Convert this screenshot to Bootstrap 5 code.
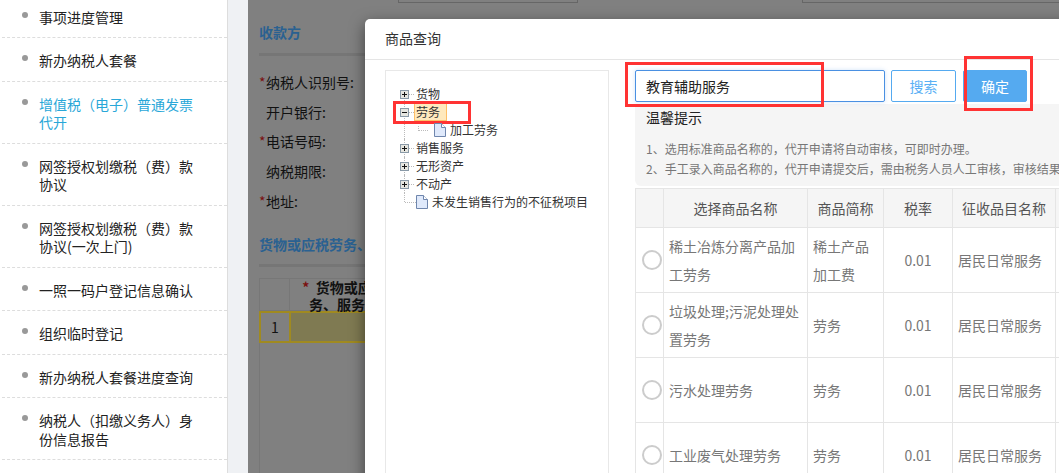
<!DOCTYPE html>
<html lang="zh-CN">
<head>
<meta charset="utf-8">
<title>商品查询</title>
<link href="https://cdn.jsdelivr.net/npm/bootstrap@5.3.0/dist/css/bootstrap.min.css" rel="stylesheet">
<style>
html,body{height:473px;overflow:hidden}
body{font-family:"Noto Sans CJK SC","Liberation Sans",sans-serif;font-size:14px;color:#333;background:#eff1f4;position:relative;line-height:18px}
.side-pane{width:228px;height:473px;background:#fff;border-right:1px solid #ddd;padding:0 0 0 2px;overflow:hidden;flex:none}
.side-list{margin:-5.5px 0 0}
.side-item{position:relative;padding:13px 30px 11px 37px;border-bottom:1px dashed #ddd;color:#222;line-height:18.5px}
.side-item::before{content:"";position:absolute;left:20px;top:17px;width:6px;height:6px;border-radius:50%;background:#999}
.side-item.is-on{color:#29a7d8}
.gutter{width:20px;flex:none}
.back-pane{flex:1;min-width:0;height:473px;background:#808080;padding-left:11px;color:#111;overflow:hidden;position:relative}
.strip{height:3px;padding-left:139px}
.strip-box{height:3px;border:1px solid #666;border-top:0}
.strip-a{width:182px}
.strip-b{width:260px;margin-left:224px;border-right:0}
.sec-title{margin-top:19px;line-height:20px;padding-bottom:11px;border-bottom:3px solid #767676;color:#2a6191;font-weight:700}
.sec-title.second{margin-top:18.5px;white-space:nowrap;padding-bottom:10px}
.form-lines{padding-top:11px}
.form-line{height:29.7px;line-height:30px;padding-left:7px;position:relative}
.req::before{content:"*";position:absolute;left:0;color:#7a1010}
.back-table{margin-top:11px;width:260px;height:200px;border-left:1px solid #777}
.back-head{height:33px;border:1px solid #777;border-left:0;display:flex}
.back-num{width:30px;border-right:1px solid #777;flex:none}
.back-name{width:122px;text-align:center;font-weight:700;line-height:17px}
.back-name i{color:#7a1010;font-style:normal;margin-right:3px}
.back-row{height:32px;display:flex;background:#7f7a52;border:2px solid #a08a20;margin-left:-1px}
.back-row .back-num{width:30px;background:#808080;border-right:2px solid #a08a20;text-align:center;line-height:28px}
.dialog{position:absolute;left:365px;top:19px;width:760px;height:520px;background:#fff;border-radius:5px 0 0 0;box-shadow:0 5px 15px rgba(0,0,0,.5)}
.dialog-head{height:41px;line-height:39px;padding-left:20px;border-bottom:1px solid #e5e5e5;color:#333}
.dialog-body{padding:10px 0 0 20px;gap:26px}
.tree-box{width:224px;height:420px;border:1px solid #e8e8e8;padding-top:14px;padding-left:14px;flex:none;font-size:12px;color:#333;line-height:18px}
.tree-row{height:18px;display:flex;align-items:center;position:relative;white-space:nowrap}
.tree-row::before{content:"";position:absolute;left:4px;top:0;bottom:0;border-left:1px dotted #bbb}
.tree-row.first::before{top:9px}
.tree-row.last::before{bottom:9px}
.tree-row.leaf-child{padding-left:34px}
.tree-row .tick{width:5px;border-top:1px dotted #bbb;flex:none;margin-right:2px}
.tree-row .tick-long{width:11px;margin-left:5px;margin-right:0}
.leaf-child .tick{position:absolute;left:18px;top:5px;width:10px;height:5px;border-left:1px dotted #bbb;border-top:0;border-bottom:1px dotted #bbb}
.toggle{width:9px;height:9px;flex:none;position:relative;z-index:1}
.doc{width:12px;height:14px;flex:none;margin-right:4px;position:relative;z-index:1}
.node-on{background:#ffe9bd;border:1px solid #ffbf66;height:18px;width:33px;line-height:16px;padding-left:1px;margin-left:-2px}
.right-col{flex:none;width:424px}
.query-row{gap:6px;height:34px}
.query-input{width:250px;height:32px;border:1px solid #4a90e2;border-radius:2px;font-size:14px;padding:0 10px;color:#222;box-shadow:0 0 4px rgba(74,144,226,.25)}
.query-btn{height:32px;width:65px;padding:0;font-size:14px;line-height:30px;border:1px solid #55aaf0;border-radius:2px;color:#5ab0f5;background:#fff}
.query-ok{width:64px;margin-left:1px;background:#55aaf0;color:#fff}
.tips{width:470px;height:82px;background:#f5f5f5;border-radius:0 0 0 6px;padding:4px 11px;white-space:nowrap;overflow:hidden;color:#777;font-size:12px}
.tips-h{font-size:14px;color:#222;line-height:18px;margin-bottom:13px}
.tips-l{line-height:20px;font-size:12px}
.goods{width:520px;margin-top:2px;table-layout:fixed;border-color:#e5e5e5;color:#777;font-size:14px;--bs-table-color:#777;--bs-table-border-color:#e5e5e5}
.goods th{height:39px;background:#f5f5f5;font-weight:400;text-align:center;padding:0;color:#555;vertical-align:middle;--bs-table-bg:#f5f5f5}
.goods td{height:65px;padding:4px 5px;line-height:28px;vertical-align:middle}
.goods td.ctr{text-align:center}
.dot-radio{display:block;width:20px;height:20px;border:2px solid #ccc;border-radius:50%;margin-left:1px}
.goods td.radio-cell{padding:0 0 0 5px}
.mark-box{position:absolute;border:3px solid #f33;pointer-events:none}
.mark-tree{left:393px;top:101px;width:78px;height:23px}
.mark-input{left:625px;top:62px;width:199px;height:45px}
.mark-ok{left:964px;top:56px;width:69px;height:55px}
</style>
</head>
<body>
<div class="d-flex">
  <aside class="side-pane">
    <ul class="list-unstyled side-list">
      <li class="side-item">事项进度管理</li>
      <li class="side-item">新办纳税人套餐</li>
      <li class="side-item is-on">增值税（电子）普通发票代开</li>
      <li class="side-item">网签授权划缴税（费）款协议</li>
      <li class="side-item">网签授权划缴税（费）款协议(一次上门)</li>
      <li class="side-item">一照一码户登记信息确认</li>
      <li class="side-item">组织临时登记</li>
      <li class="side-item">新办纳税人套餐进度查询</li>
      <li class="side-item">纳税人（扣缴义务人）身份信息报告</li>
    </ul>
  </aside>
  <div class="gutter"></div>
  <main class="back-pane">
    <div class="strip d-flex"><div class="strip-box strip-a"></div><div class="strip-box strip-b"></div></div>
    <div class="sec-title">收款方</div>
    <div class="form-lines">
      <div class="form-line req">纳税人识别号:</div>
      <div class="form-line">开户银行:</div>
      <div class="form-line req">电话号码:</div>
      <div class="form-line">纳税期限:</div>
      <div class="form-line req">地址:</div>
    </div>
    <div class="sec-title second">货物或应税劳务、服务</div>
    <div class="back-table">
      <div class="back-head"><div class="back-num"></div><div class="back-name"><i>*</i> 货物或应税劳务、服务名称</div></div>
      <div class="back-row"><div class="back-num">1</div></div>
    </div>
  </main>
</div>

<section class="dialog">
  <div class="dialog-head">商品查询</div>
  <div class="dialog-body d-flex">
    <div class="tree-box">
      <div class="tree-row first"><svg class="toggle" viewBox="0 0 9 9"><rect x=".5" y=".5" width="8" height="8" fill="#e6e6e0" stroke="#8a9aa8"/><path d="M2 4.5h5M4.5 2v5" stroke="#111"/></svg><span class="tick"></span>货物</div>
      <div class="tree-row"><svg class="toggle" viewBox="0 0 9 9"><rect x=".5" y=".5" width="8" height="8" fill="#e6e6e0" stroke="#8a9aa8"/><path d="M2 4.5h5" stroke="#111"/></svg><span class="tick"></span><span class="node-on">劳务</span></div>
      <div class="tree-row leaf-child"><span class="tick"></span><svg class="doc" viewBox="0 0 12 14"><path d="M.5.5h7l4 4v9H.5z" fill="#dfe9fb" stroke="#6f86ad"/><path d="M7.5.5v4h4" fill="#fff" stroke="#6f86ad"/></svg>加工劳务</div>
      <div class="tree-row"><svg class="toggle" viewBox="0 0 9 9"><rect x=".5" y=".5" width="8" height="8" fill="#e6e6e0" stroke="#8a9aa8"/><path d="M2 4.5h5M4.5 2v5" stroke="#111"/></svg><span class="tick"></span>销售服务</div>
      <div class="tree-row"><svg class="toggle" viewBox="0 0 9 9"><rect x=".5" y=".5" width="8" height="8" fill="#e6e6e0" stroke="#8a9aa8"/><path d="M2 4.5h5M4.5 2v5" stroke="#111"/></svg><span class="tick"></span>无形资产</div>
      <div class="tree-row"><svg class="toggle" viewBox="0 0 9 9"><rect x=".5" y=".5" width="8" height="8" fill="#e6e6e0" stroke="#8a9aa8"/><path d="M2 4.5h5M4.5 2v5" stroke="#111"/></svg><span class="tick"></span>不动产</div>
      <div class="tree-row last"><span class="tick tick-long"></span><svg class="doc" viewBox="0 0 12 14"><path d="M.5.5h7l4 4v9H.5z" fill="#dfe9fb" stroke="#6f86ad"/><path d="M7.5.5v4h4" fill="#fff" stroke="#6f86ad"/></svg>未发生销售行为的不征税项目</div>
    </div>
    <div class="right-col">
      <div class="query-row d-flex">
        <input class="form-control query-input" type="text" value="教育辅助服务">
        <button class="btn query-btn" type="button">搜索</button>
        <button class="btn query-btn query-ok" type="button">确定</button>
      </div>
      <div class="tips">
        <div class="tips-h">温馨提示</div>
        <div class="tips-l">1、选用标准商品名称的，代开申请将自动审核，可即时办理。</div>
        <div class="tips-l">2、手工录入商品名称的，代开申请提交后，需由税务人员人工审核，审核结果</div>
      </div>
      <table class="table table-bordered goods mb-0">
        <colgroup><col style="width:28px"><col style="width:144px"><col style="width:76px"><col style="width:69px"><col style="width:103px"><col></colgroup>
        <thead><tr><th></th><th>选择商品名称</th><th>商品简称</th><th>税率</th><th>征收品目名称</th><th></th></tr></thead>
        <tbody>
          <tr><td class="radio-cell"><span class="dot-radio"></span></td><td>稀土冶炼分离产品加工劳务</td><td>稀土产品加工费</td><td class="ctr">0.01</td><td>居民日常服务</td><td></td></tr>
          <tr><td class="radio-cell"><span class="dot-radio"></span></td><td>垃圾处理;污泥处理处置劳务</td><td>劳务</td><td class="ctr">0.01</td><td>居民日常服务</td><td></td></tr>
          <tr><td class="radio-cell"><span class="dot-radio"></span></td><td>污水处理劳务</td><td>劳务</td><td class="ctr">0.01</td><td>居民日常服务</td><td></td></tr>
          <tr><td class="radio-cell"><span class="dot-radio"></span></td><td>工业废气处理劳务</td><td>劳务</td><td class="ctr">0.01</td><td>居民日常服务</td><td></td></tr>
        </tbody>
      </table>
    </div>
  </div>
</section>

<div class="mark-box mark-tree"></div>
<div class="mark-box mark-input"></div>
<div class="mark-box mark-ok"></div>
<script src="https://cdn.jsdelivr.net/npm/bootstrap@5.3.0/dist/js/bootstrap.bundle.min.js"></script>
</body>
</html>
